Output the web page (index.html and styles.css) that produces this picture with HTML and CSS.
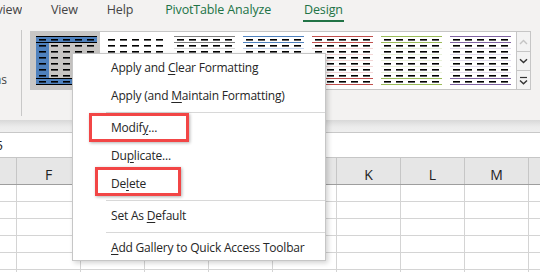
FILE: index.html
```html
<!DOCTYPE html>
<html lang="en">
<head>
<meta charset="utf-8">
<title>Table Styles gallery context menu</title>
<link rel="stylesheet" href="styles.css">
</head>
<body>
<div class="app">
  <div class="tabs">
    <div class="tab tab-clip"><span>Review</span></div>
    <div class="tab">View</div>
    <div class="tab">Help</div>
    <div class="tab ctx">PivotTable Analyze</div>
    <div class="tab ctx active">Design</div>
  </div>

  <div class="ribbon">
    <div class="group-left">
      <div class="group-label"><span>Options</span></div>
    </div>
    <div class="group-sep"></div>
    <div class="gallery">
      <div class="gitems">
        <div class="gitem selected">
          <svg class="thumb" width="61" height="49" viewBox="0 0 61 49" shape-rendering="crispEdges">
            <defs>
              <pattern id="dp" x="3" y="3" width="12" height="6" patternUnits="userSpaceOnUse">
                <rect width="7" height="1.6" fill="#000" shape-rendering="auto"/>
              </pattern>
            </defs>
            <g fill="#4f81bd">
              <rect x="0" y="0" width="61" height="7"/>
              <rect x="0" y="6" width="13" height="36"/>
              <rect x="0" y="42" width="61" height="7"/>
            </g>
            <g fill="#000">
              <rect y="0" width="61" height="1"/>
              <rect y="6" width="61" height="1"/>
              <rect y="42" width="61" height="1"/>
              <rect y="48" width="61" height="1"/>
            </g>
            <rect x="3" y="3" width="55" height="44" fill="url(#dp)"/>
          </svg>
        </div>
        <div class="gitem">
          <svg class="thumb" width="61" height="49" viewBox="0 0 61 49" shape-rendering="crispEdges">
            <rect x="3" y="3" width="55" height="44" fill="url(#dp)"/>
          </svg>
        </div>
        <div class="gitem">
          <svg class="thumb" width="61" height="49" viewBox="0 0 61 49" shape-rendering="crispEdges">
            <g fill="#dadada">
              <rect y="12" width="61" height="1"/><rect y="18" width="61" height="1"/><rect y="24" width="61" height="1"/><rect y="30" width="61" height="1"/><rect y="36" width="61" height="1"/>
            </g>
            <g fill="#7f7f7f">
              <rect y="0" width="61" height="1"/><rect y="6" width="61" height="1"/><rect y="42" width="61" height="1"/><rect y="48" width="61" height="1"/>
            </g>
            <rect x="3" y="3" width="55" height="44" fill="url(#dp)"/>
          </svg>
        </div>
        <div class="gitem">
          <svg class="thumb" width="61" height="49" viewBox="0 0 61 49" shape-rendering="crispEdges">
            <g fill="#c9d7ee">
              <rect y="12" width="61" height="1"/><rect y="18" width="61" height="1"/><rect y="24" width="61" height="1"/><rect y="30" width="61" height="1"/><rect y="36" width="61" height="1"/>
            </g>
            <g fill="#4f81bd">
              <rect y="0" width="61" height="1"/><rect y="6" width="61" height="1"/><rect y="42" width="61" height="1"/><rect y="48" width="61" height="1"/>
            </g>
            <rect x="3" y="3" width="55" height="44" fill="url(#dp)"/>
          </svg>
        </div>
        <div class="gitem">
          <svg class="thumb" width="61" height="49" viewBox="0 0 61 49" shape-rendering="crispEdges">
            <g fill="#f2d6d6">
              <rect y="12" width="61" height="1"/><rect y="18" width="61" height="1"/><rect y="24" width="61" height="1"/><rect y="30" width="61" height="1"/><rect y="36" width="61" height="1"/>
            </g>
            <g fill="#c0504d">
              <rect y="0" width="61" height="1"/><rect y="6" width="61" height="1"/><rect y="42" width="61" height="1"/><rect y="48" width="61" height="1"/>
            </g>
            <rect x="3" y="3" width="55" height="44" fill="url(#dp)"/>
          </svg>
        </div>
        <div class="gitem">
          <svg class="thumb" width="61" height="49" viewBox="0 0 61 49" shape-rendering="crispEdges">
            <g fill="#e8f0da">
              <rect y="12" width="61" height="1"/><rect y="18" width="61" height="1"/><rect y="24" width="61" height="1"/><rect y="30" width="61" height="1"/><rect y="36" width="61" height="1"/>
            </g>
            <g fill="#9bbb59">
              <rect y="0" width="61" height="1"/><rect y="6" width="61" height="1"/><rect y="42" width="61" height="1"/><rect y="48" width="61" height="1"/>
            </g>
            <rect x="3" y="3" width="55" height="44" fill="url(#dp)"/>
          </svg>
        </div>
        <div class="gitem">
          <svg class="thumb" width="61" height="49" viewBox="0 0 61 49" shape-rendering="crispEdges">
            <g fill="#e2dcec">
              <rect y="12" width="61" height="1"/><rect y="18" width="61" height="1"/><rect y="24" width="61" height="1"/><rect y="30" width="61" height="1"/><rect y="36" width="61" height="1"/>
            </g>
            <g fill="#8064a2">
              <rect y="0" width="61" height="1"/><rect y="6" width="61" height="1"/><rect y="42" width="61" height="1"/><rect y="48" width="61" height="1"/>
            </g>
            <rect x="3" y="3" width="55" height="44" fill="url(#dp)"/>
          </svg>
        </div>
      </div>
      <div class="gscroll">
        <div class="gbtn up">
          <svg width="9" height="6" viewBox="0 0 9 6"><path d="M1 5 L4.5 1.5 L8 5" fill="none" stroke="#c4c4c4" stroke-width="1.4"/></svg>
        </div>
        <div class="gbtn down">
          <svg width="9" height="6" viewBox="0 0 9 6"><path d="M1 1.2 L4.5 4.6 L8 1.2" fill="none" stroke="#333" stroke-width="1.4"/></svg>
        </div>
        <div class="gbtn more">
          <svg width="9" height="9" viewBox="0 0 9 9"><path d="M1 1.5 H8" stroke="#333" stroke-width="1.2"/><path d="M1 4.4 L4.5 7.8 L8 4.4" fill="none" stroke="#333" stroke-width="1.4"/></svg>
        </div>
      </div>
    </div>
  </div>

  <div class="ribbon-shadow"></div>

  <div class="formula-bar">
    <div class="namebox"><span>B5</span></div>
  </div>

  <div class="col-headers">
    <div class="ch"></div>
    <div class="ch">F</div>
    <div class="ch">G</div>
    <div class="ch">H</div>
    <div class="ch">I</div>
    <div class="ch">J</div>
    <div class="ch">K</div>
    <div class="ch">L</div>
    <div class="ch">M</div>
    <div class="ch">N</div>
    <div class="ch"></div>
  </div>

  <div class="grid">
    <div class="cell"></div><div class="cell"></div><div class="cell"></div><div class="cell"></div><div class="cell"></div><div class="cell"></div><div class="cell"></div><div class="cell"></div><div class="cell"></div><div class="cell"></div><div class="cell"></div>
    <div class="cell"></div><div class="cell"></div><div class="cell"></div><div class="cell"></div><div class="cell"></div><div class="cell"></div><div class="cell"></div><div class="cell"></div><div class="cell"></div><div class="cell"></div><div class="cell"></div>
    <div class="cell"></div><div class="cell"></div><div class="cell"></div><div class="cell"></div><div class="cell"></div><div class="cell"></div><div class="cell"></div><div class="cell"></div><div class="cell"></div><div class="cell"></div><div class="cell"></div>
    <div class="cell"></div><div class="cell"></div><div class="cell"></div><div class="cell"></div><div class="cell"></div><div class="cell"></div><div class="cell"></div><div class="cell"></div><div class="cell"></div><div class="cell"></div><div class="cell"></div>
    <div class="cell"></div><div class="cell"></div><div class="cell"></div><div class="cell"></div><div class="cell"></div><div class="cell"></div><div class="cell"></div><div class="cell"></div><div class="cell"></div><div class="cell"></div><div class="cell"></div>
    <div class="cell"></div><div class="cell"></div><div class="cell"></div><div class="cell"></div><div class="cell"></div><div class="cell"></div><div class="cell"></div><div class="cell"></div><div class="cell"></div><div class="cell"></div><div class="cell"></div>
  </div>

  <div class="menu">
    <div class="mi">Apply and <u>C</u>lear Formatting</div>
    <div class="mi">Apply (and <u>M</u>aintain Formatting)</div>
    <div class="msep"></div>
    <div class="mi">Modif<u>y</u>...</div>
    <div class="mi">Du<u>p</u>licate...</div>
    <div class="mi">De<u>l</u>ete</div>
    <div class="msep"></div>
    <div class="mi">Set As <u>D</u>efault</div>
    <div class="msep"></div>
    <div class="mi"><u>A</u>dd Gallery to Quick Access Toolbar</div>
    <div class="mark mark-modify"></div>
    <div class="mark mark-delete"></div>
  </div>
</div>
</body>
</html>
```

FILE: styles.css
```css
html, body {
  margin: 0;
  padding: 0;
}

body {
  width: 540px;
  height: 272px;
  overflow: hidden;
  background: #ffffff;
  font-family: "Open Sans", "Noto Sans", "DejaVu Sans", sans-serif;
}

.app {
  position: relative;
  width: 540px;
  height: 272px;
  overflow: hidden;
}

/* ---------- ribbon tabs ---------- */
.tabs {
  height: 24px;
  background: #f3f2f1;
  display: flex;
  align-items: flex-start;
  gap: 29px;
  font-size: 12.5px;
  letter-spacing: -0.15px;
  color: #444444;
}

.tab {
  line-height: 20px;
  border-bottom: 2px solid transparent;
  white-space: nowrap;
}

.tab-clip {
  width: 22px;
  overflow: hidden;
  display: flex;
  justify-content: flex-end;
}

.tab.ctx {
  margin-left: 3px;
  color: #217346;
}

.tab.active {
  border-bottom-color: #217346;
  padding: 0 1px;
}

/* ---------- ribbon body ---------- */
.ribbon {
  height: 96px;
  box-sizing: border-box;
  padding-top: 7px;
  background: #f3f2f1;
  display: flex;
  align-items: flex-start;
}

.group-left {
  width: 21px;
}

.group-label {
  margin-top: 41px;
  width: 7px;
  overflow: hidden;
  display: flex;
  justify-content: flex-end;
  font-size: 12px;
  line-height: 16px;
  color: #444444;
}

.group-sep {
  width: 1px;
  height: 86px;
  margin-top: -1px;
  background: #c8c8c8;
}

.gallery {
  margin-left: 8px;
  display: flex;
  height: 59px;
}

.gitems {
  display: flex;
  width: 486px;
  box-sizing: border-box;
  border: 1px solid #c6c6c6;
  border-right: 0;
  background: #ffffff;
}

.gitem {
  display: flex;
  padding: 4px 3px 4px 5px;
}

.gitem.selected {
  background: #c8c6c4;
}

.thumb {
  display: block;
}

.gscroll {
  width: 15px;
  display: flex;
  flex-direction: column;
}

.gbtn {
  box-sizing: border-box;
  border: 1px solid #c6c6c6;
  background: #f3f3f3;
  display: flex;
  align-items: center;
  justify-content: center;
}

.gbtn svg {
  display: block;
}

.gbtn.up {
  height: 21px;
}

.gbtn.down {
  height: 20px;
  margin-top: -1px;
}

.gbtn.more {
  height: 20px;
  margin-top: -1px;
}

.ribbon-shadow {
  height: 12px;
  background: linear-gradient(#d8d8d8, #e4e4e4 4px, #ececec 7px, #efefef);
}

/* ---------- formula bar ---------- */
.formula-bar {
  height: 24px;
  border-top: 1px solid #c8c8c8;
  border-bottom: 1px solid #c6c6c6;
  background: #ffffff;
}

.namebox {
  width: 3px;
  overflow: hidden;
  display: flex;
  justify-content: flex-end;
  font-size: 13px;
  line-height: 24px;
  color: #222222;
}

/* ---------- sheet ---------- */
.col-headers,
.grid {
  display: grid;
  grid-template-columns: 17px repeat(9, 64px) 1fr;
}

.col-headers {
  height: 26px;
  background: #e6e6e6;
  border-bottom: 1px solid #9e9e9e;
}

.ch {
  box-sizing: border-box;
  border-right: 1px solid #c6c6c6;
  padding-top: 9px;
  text-align: center;
  font-size: 14px;
  line-height: 16px;
  color: #222222;
}

.grid {
  grid-auto-rows: 17px;
}

.cell {
  box-sizing: border-box;
  border-right: 1px solid #d4d4d4;
  border-bottom: 1px solid #d4d4d4;
}

/* ---------- context menu ---------- */
.menu {
  position: absolute;
  left: 72px;
  top: 53px;
  width: 254px;
  height: 208px;
  box-sizing: border-box;
  background: #ffffff;
  border: 1px solid #c6c6c6;
  box-shadow: 2px 2px 5px rgba(0, 0, 0, 0.18);
  font-size: 12px;
  letter-spacing: -0.2px;
  color: #262626;
}

.mi {
  height: 28px;
  line-height: 28px;
  padding-left: 38px;
  white-space: nowrap;
}

.mi u {
  text-underline-offset: 2px;
}

.msep {
  height: 1px;
  margin: 2px 0 1px 33px;
  background: #d8d8d8;
}

.mark {
  position: absolute;
  box-sizing: border-box;
  border: 3px solid #f24646;
  box-shadow: 1px 1px 3px rgba(0, 0, 0, 0.3);
}

.mark-modify {
  left: 16px;
  top: 59px;
  width: 100px;
  height: 29px;
}

.mark-delete {
  left: 22px;
  top: 113px;
  width: 86px;
  height: 29px;
}
```
